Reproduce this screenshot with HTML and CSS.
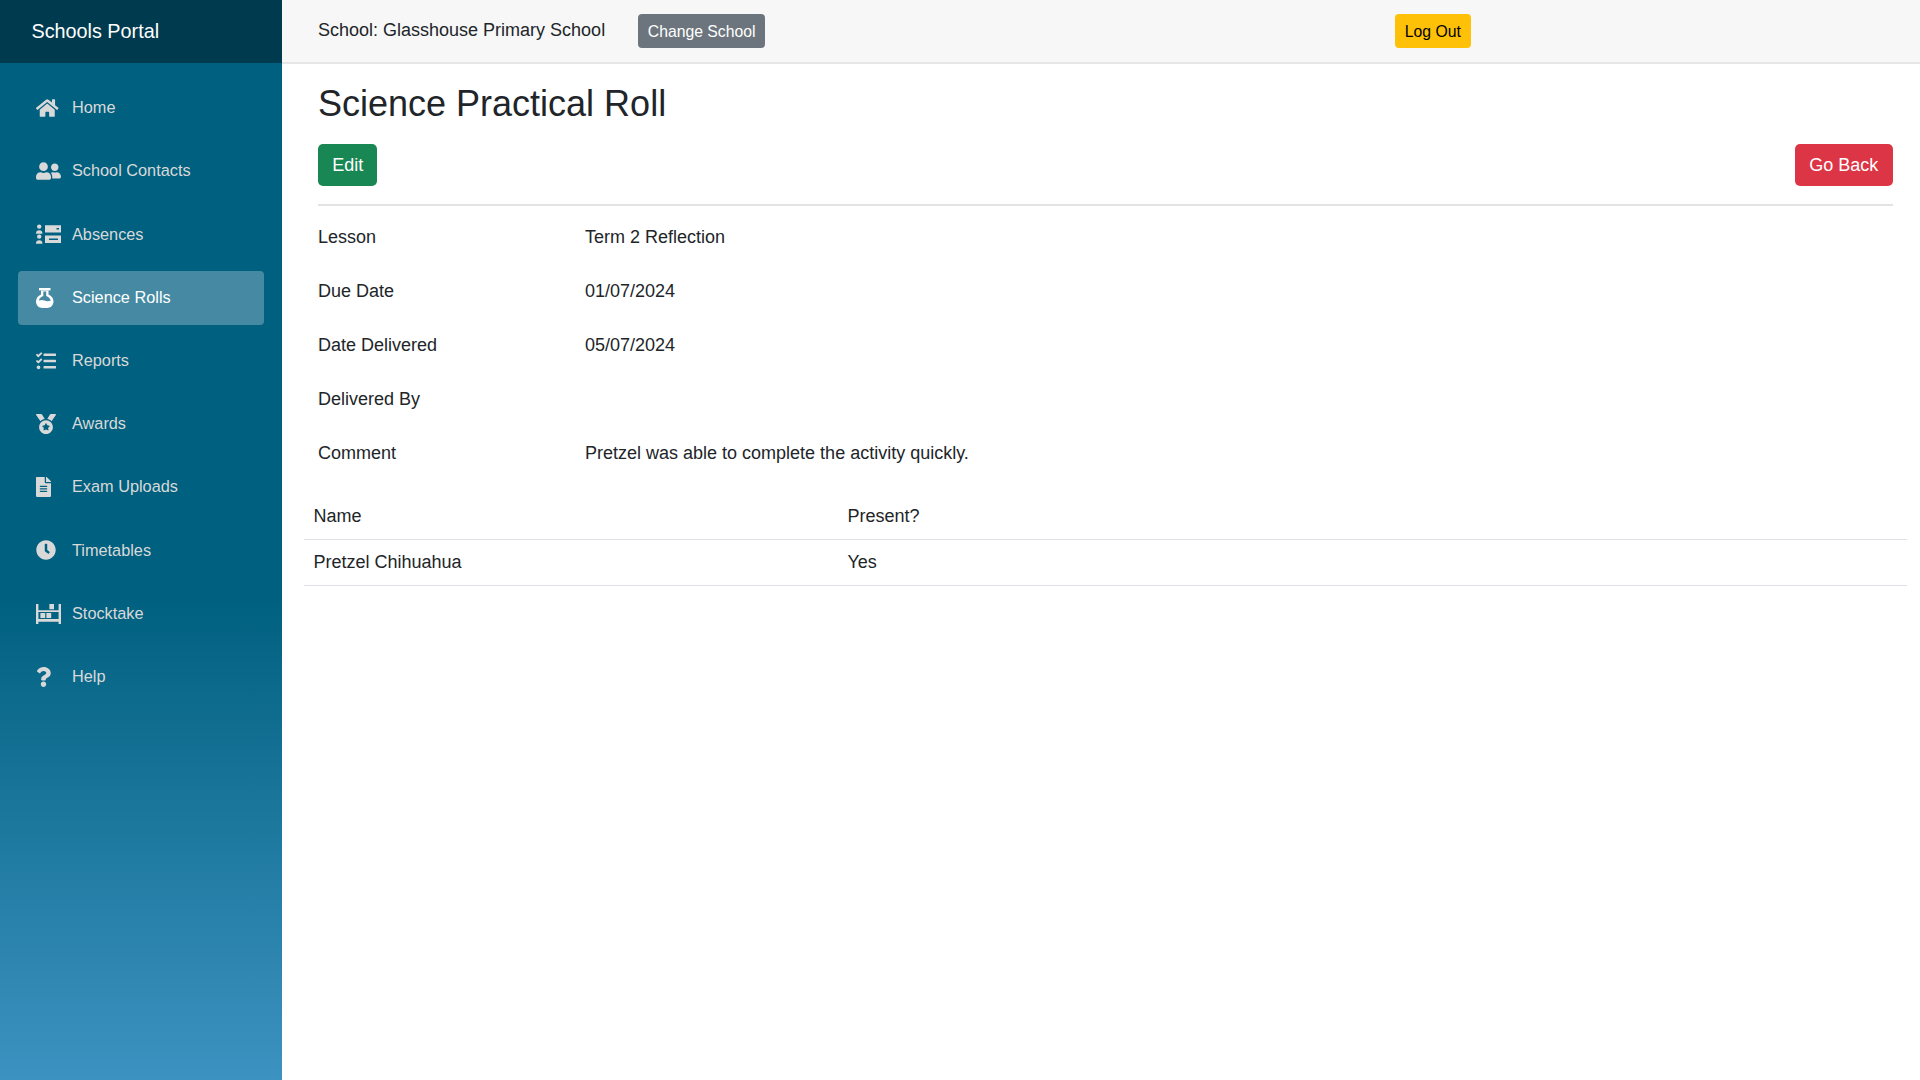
FILE: index.html
```html
<!DOCTYPE html>
<html lang="en">
  <head>
    <meta charset="UTF-8" />
    <title>Schools Portal</title>
    <link rel="stylesheet" href="styles.css">
  </head>
  <body>
    <aside class="sidebar">
      <div class="brand">Schools Portal</div>
      <nav class="nav">
        <a class="nav-item">
          <span class="nav-icon"><svg width="22.5" height="20" viewBox="0 0 576 512"><path d="M280.37 148.26L96 300.11V464a16 16 0 0 0 16 16l112.06-.29a16 16 0 0 0 15.92-16V368a16 16 0 0 1 16-16h64a16 16 0 0 1 16 16v95.64a16 16 0 0 0 16 16.05L464 480a16 16 0 0 0 16-16V300L295.67 148.26a12.19 12.19 0 0 0-15.3 0zM571.6 251.47L488 182.56V44.05a12 12 0 0 0-12-12h-56a12 12 0 0 0-12 12v72.61L318.47 43a48 48 0 0 0-61 0L4.34 251.47a12 12 0 0 0-1.6 16.9l25.5 31A12 12 0 0 0 45.15 301l235.22-193.74a12.19 12.19 0 0 1 15.3 0L530.9 301a12 12 0 0 0 16.9-1.6l25.5-31a12 12 0 0 0-1.7-16.93z"/></svg></span>
          Home
        </a>
        <a class="nav-item">
          <span class="nav-icon"><svg width="25" height="20" viewBox="0 0 640 512"><path d="M192 256c61.9 0 112-50.1 112-112S253.9 32 192 32 80 82.1 80 144s50.1 112 112 112zm76.8 32h-8.3c-20.8 10-43.9 16-68.5 16s-47.6-6-68.5-16h-8.3C51.6 288 0 339.6 0 403.2V432c0 26.5 21.5 48 48 48h288c26.5 0 48-21.5 48-48v-28.8c0-63.6-51.6-115.2-115.2-115.2zM480 256c53 0 96-43 96-96s-43-96-96-96-96 43-96 96 43 96 96 96zm48 32h-3.8c-13.9 4.8-28.6 8-44.2 8s-30.3-3.2-44.2-8H432c-20.4 0-39.2 5.9-55.7 15.4 24.4 26.3 39.7 61.2 39.7 99.8v38.4c0 2.2-.5 4.3-.6 6.4H592c26.5 0 48-21.5 48-48 0-61.9-50.1-112-112-112z"/></svg></span>
          School Contacts
        </a>
        <a class="nav-item">
          <span class="nav-icon"><svg width="25" height="20" viewBox="0 0 25 20"><circle cx="3.2" cy="2.6" r="2.2"/><path d="M0 9.2c0-2 1.2-3 3.2-3s3.2 1 3.2 3v.5H0z"/><circle cx="3.2" cy="12.6" r="2.2"/><path d="M0 19.2c0-2 1.2-3 3.2-3s3.2 1 3.2 3v.5H0z"/><path fill-rule="evenodd" d="M9 1.2h16v7.2H9zM20.5 4v1.6h2.5V4z"/><path fill-rule="evenodd" d="M9 11.6h16v7.4H9zM13 14.6v1.4h9v-1.4z"/></svg></span>
          Absences
        </a>
        <a class="nav-item active">
          <span class="nav-icon"><svg width="17.5" height="20" viewBox="0 0 17.5 20"><path d="M3 0h11.5v2.4H3z"/><path fill-rule="evenodd" d="M5 2.4h7.5v4.2c3 1.4 5 3.6 5 7 0 3.8-3 6.4-6.4 6.4H6.4C3 20 0 17.400 0 13.600c0-3.400 2-5.600 5-7zM7.300 3.600v4.500c-2.300.9-3.900 2.300-4.500 4.500 1.900-.8 3.700-.8 5.700 0 2.100.8 4.200.8 6.200 0-.6-2.200-2.200-3.600-4.500-4.500V3.600z"/></svg></span>
          Science Rolls
        </a>
        <a class="nav-item">
          <span class="nav-icon"><svg width="20" height="20" viewBox="0 0 512 512"><path d="M139.61 35.5a12 12 0 0 0-17 0L58.93 98.81l-22.7-22.12a12 12 0 0 0-17 0L3.53 92.41a12 12 0 0 0 0 17l47.59 47.4a12.78 12.78 0 0 0 17.61 0l15.59-15.62L156.52 69a12.09 12.09 0 0 0 .09-17zm0 159.19a12 12 0 0 0-17 0l-63.68 63.72-22.7-22.1a12 12 0 0 0-17 0L3.53 252a12 12 0 0 0 0 17L51 316.5a12.77 12.77 0 0 0 17.6 0l15.7-15.69 72.2-72.22a12 12 0 0 0 .09-16.9zM64 368c-26.49 0-48.59 21.5-48.59 48S37.53 464 64 464a48 48 0 0 0 0-96zm432 16H208a16 16 0 0 0-16 16v32a16 16 0 0 0 16 16h288a16 16 0 0 0 16-16v-32a16 16 0 0 0-16-16zm0-320H208a16 16 0 0 0-16 16v32a16 16 0 0 0 16 16h288a16 16 0 0 0 16-16V80a16 16 0 0 0-16-16zm0 160H208a16 16 0 0 0-16 16v32a16 16 0 0 0 16 16h288a16 16 0 0 0 16-16v-32a16 16 0 0 0-16-16z"/></svg></span>
          Reports
        </a>
        <a class="nav-item">
          <span class="nav-icon"><svg width="20" height="20" viewBox="0 0 512 512"><path d="M223.75 130.75L154.62 15.54A31.997 31.997 0 0 0 127.18 0H16.03C3.08 0-4.5 14.57 2.92 25.18l111.27 158.96c29.72-27.77 67.52-46.83 109.56-53.39zM495.97 0H384.82c-11.24 0-21.66 5.9-27.44 15.54l-69.13 115.21c42.04 6.56 79.84 25.62 109.56 53.38L509.08 25.18C516.5 14.57 508.92 0 495.97 0zM256 160c-97.2 0-176 78.8-176 176s78.8 176 176 176 176-78.8 176-176-78.8-176-176-176zm92.52 157.26l-37.93 36.96 8.97 52.22c1.6 9.36-8.26 16.51-16.65 12.09L256 393.88l-46.9 24.65c-8.4 4.45-18.25-2.74-16.65-12.09l8.97-52.22-37.93-36.96c-6.82-6.64-3.05-18.23 6.35-19.59l52.43-7.64 23.43-47.52c2.11-4.28 6.19-6.39 10.28-6.39 4.11 0 8.22 2.14 10.33 6.39l23.43 47.52 52.43 7.64c9.4 1.36 13.17 12.95 6.35 19.59z"/></svg></span>
          Awards
        </a>
        <a class="nav-item">
          <span class="nav-icon"><svg width="15" height="20" viewBox="0 0 384 512"><path d="M224 136V0H24C10.7 0 0 10.7 0 24v464c0 13.3 10.7 24 24 24h336c13.3 0 24-10.7 24-24V160H248c-13.2 0-24-10.8-24-24zm64 236c0 6.6-5.4 12-12 12H108c-6.6 0-12-5.4-12-12v-8c0-6.6 5.4-12 12-12h168c6.6 0 12 5.4 12 12v8zm0-64c0 6.6-5.4 12-12 12H108c-6.6 0-12-5.4-12-12v-8c0-6.6 5.4-12 12-12h168c6.6 0 12 5.4 12 12v8zm0-72v8c0 6.6-5.4 12-12 12H108c-6.6 0-12-5.4-12-12v-8c0-6.6 5.4-12 12-12h168c6.6 0 12 5.4 12 12zm96-114.1v6.1H256V0h6.1c6.4 0 12.5 2.5 17 7l97.9 98c4.5 4.5 7 10.6 7 16.9z"/></svg></span>
          Exam Uploads
        </a>
        <a class="nav-item">
          <span class="nav-icon"><svg width="20" height="20" viewBox="0 0 512 512"><path d="M256,8C119,8,8,119,8,256S119,504,256,504,504,393,504,256,393,8,256,8Zm92.49,313h0l-20,25a16,16,0,0,1-22.49,2.5h0l-67-49.72a40,40,0,0,1-15-31.23V112a16,16,0,0,1,16-16h32a16,16,0,0,1,16,16V256l58,42.5A16,16,0,0,1,348.49,321Z"/></svg></span>
          Timetables
        </a>
        <a class="nav-item">
          <span class="nav-icon"><svg width="25" height="20" viewBox="0 0 25 20"><path d="M0 0h2.400v20H0zM22.600 0H25v20h-2.400z"/><path d="M2 15h21v2.800H2zM2 6.200h21v1.800H2z"/><path d="M13.400 0h4.600v5.200h-4.600zM4.400 9h4.800v5h-4.800zM10.400 9h4.800v5h-4.800z"/></svg></span>
          Stocktake
        </a>
        <a class="nav-item">
          <span class="nav-icon"><svg width="15" height="20" viewBox="0 0 384 512"><path d="M202.021 0C122.202 0 70.503 32.703 29.914 91.026c-7.363 10.58-5.093 25.086 5.178 32.874l43.138 32.709c10.373 7.865 25.132 6.026 33.253-4.148 25.049-31.381 43.63-49.449 82.757-49.449 30.764 0 68.816 19.799 68.816 49.631 0 22.552-18.617 34.134-48.993 51.164-35.423 19.86-82.299 44.576-82.299 106.405V320c0 13.255 10.745 24 24 24h72.471c13.255 0 24-10.745 24-24v-5.773c0-42.86 125.268-44.645 125.268-160.627C377.504 66.256 286.902 0 202.021 0zM192 373.459c-38.196 0-69.271 31.075-69.271 69.271 0 38.195 31.075 69.27 69.271 69.27s69.271-31.075 69.271-69.271-31.075-69.27-69.271-69.27z"/></svg></span>
          Help
        </a>
      </nav>
    </aside>
    <div class="page">
      <header class="topbar">
        <div class="school">
          <span class="school-name">School: Glasshouse Primary School</span>
          <button class="btn btn-sm btn-grey">Change School</button>
        </div>
        <button class="btn btn-sm btn-yellow">Log Out</button>
      </header>
      <main class="content">
        <section class="record">
          <h2 class="title">Science Practical Roll</h2>
          <div class="actions">
            <button class="btn btn-green">Edit</button>
            <button class="btn btn-red">Go Back</button>
          </div>
          <hr class="divider" />
          <dl class="details">
            <div class="detail"><dt>Lesson</dt><dd>Term 2 Reflection</dd></div>
            <div class="detail"><dt>Due Date</dt><dd>01/07/2024</dd></div>
            <div class="detail"><dt>Date Delivered</dt><dd>05/07/2024</dd></div>
            <div class="detail"><dt>Delivered By</dt><dd></dd></div>
            <div class="detail"><dt>Comment</dt><dd>Pretzel was able to complete the activity quickly.</dd></div>
          </dl>
        </section>
        <table class="roll">
          <thead>
            <tr><th class="name-col">Name</th><th>Present?</th></tr>
          </thead>
          <tbody>
            <tr><td>Pretzel Chihuahua</td><td>Yes</td></tr>
          </tbody>
        </table>
      </main>
    </div>
  </body>
</html>
```

FILE: styles.css
```css
* {
  box-sizing: border-box;
}

body {
  display: flex;
  margin: 0;
  height: 1080px;
  overflow: hidden;
  font-family: "Liberation Sans", Arial, sans-serif;
  font-size: 18px;
  line-height: 26.4px;
  color: #212529;
  background: #fff;
}

.sidebar {
  width: 282px;
  flex-shrink: 0;
  display: flex;
  flex-direction: column;
  background: linear-gradient(180deg, #00607f 0%, #00607f 55%, #3c92c0 100%);
}

.brand {
  height: 63px;
  padding-left: 31.5px;
  display: flex;
  align-items: center;
  font-size: 19.8px;
  color: #fff;
  background: #003a4e;
}

.nav {
  display: flex;
  flex-direction: column;
  padding: 18px 18px 0;
  gap: 9.2px;
}

.nav-item {
  display: flex;
  align-items: center;
  height: 54px;
  padding: 0 0 1px 18px;
  font-size: 16.3px;
  color: #d9d9d9;
  border-radius: 4px;
}

.nav-item.active {
  color: #fff;
  background: #458aa2;
}

.nav-icon {
  display: flex;
  width: 36px;
  margin-top: 1px;
  flex-shrink: 0;
}

.nav-icon svg {
  fill: currentColor;
}

.page {
  flex: 1;
  min-width: 0;
}

.topbar {
  height: 64px;
  padding-left: 36px;
  display: flex;
  align-items: center;
  background: #f7f7f7;
  border-bottom: 2px solid #e6e6e6;
}

.school {
  width: 1077px;
  display: flex;
  align-items: center;
}

.school-name {
  width: 320px;
  margin-top: -2px;
}

.btn {
  padding: 7px 13.2px 6.2px;
  font-family: inherit;
  font-size: 18px;
  line-height: 26.4px;
  color: #fff;
  border: 1px solid transparent;
  border-radius: 5px;
}

.btn-sm {
  padding: 5.4px 8.8px 3.4px;
  font-size: 15.75px;
  line-height: 23.1px;
  border-radius: 4px;
}

.btn-grey {
  background: #6c757d;
}

.btn-yellow {
  color: #000;
  background: #ffc107;
}

.btn-green {
  background: #198754;
}

.btn-red {
  background: #dc3545;
}

.content {
  padding: 19px 13px 0 22px;
}

.record {
  margin: 0 14.5px 0 14px;
}

.title {
  margin: 0 0 19.4px;
  font-size: 36px;
  font-weight: 400;
  line-height: 42px;
}

.actions {
  display: flex;
  justify-content: space-between;
}

.divider {
  margin: 17.6px 0 18px;
  border: 0;
  border-top: 2px solid #e3e3e3;
}

.details {
  margin: 0 0 28px;
}

.detail {
  display: flex;
  margin-bottom: 27.6px;
}

.detail:last-child {
  margin-bottom: 0;
}

.detail dt {
  width: 267px;
  font-weight: 400;
}

.detail dd {
  margin: 0;
  min-height: 26.4px;
}

.roll {
  width: 100%;
  border-collapse: collapse;
  color: #212529;
}

.roll th,
.roll td {
  padding: 9.3px 9.4px;
  font-weight: 400;
  text-align: left;
  border-bottom: 1px solid #dee2e6;
}

.name-col {
  width: 534px;
}
```
